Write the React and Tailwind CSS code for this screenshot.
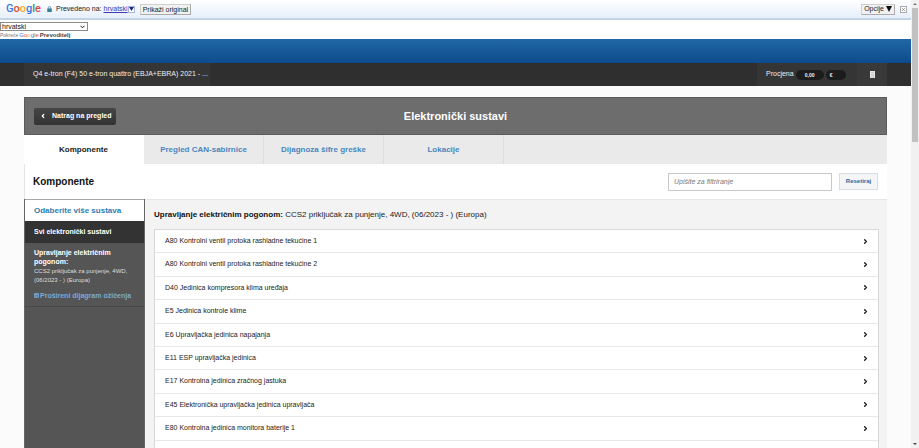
import { ChevronLeft, ChevronRight, X } from "lucide-react";

const tabs = ["Komponente", "Pregled CAN-sabirnice", "Dijagnoza šifre greške", "Lokacije"];

const components = [
  "A80 Kontrolni ventil protoka rashladne tekućine 1",
  "A80 Kontrolni ventil protoka rashladne tekućine 2",
  "D40 Jedinica kompresora klima uređaja",
  "E5 Jedinica kontrole klime",
  "E6 Upravljačka jedinica napajanja",
  "E11 ESP upravljačka jedinica",
  "E17 Kontrolna jedinica zračnog jastuka",
  "E45 Elektronička upravljačka jedinica upravljača",
  "E80 Kontrolna jedinica monitora baterije 1",
];

export default function App() {
  return (
    <div className="flex h-screen overflow-hidden bg-[#fbfbfb] font-['Liberation_Sans',Arial,sans-serif] text-[7px] text-[#222]">
      <div className="flex min-w-0 flex-1 flex-col">
        <TranslateBar />
        <LanguagePicker />

        {/* brand bar */}
        <div className="h-6 shrink-0 bg-linear-to-b from-[#2067a6] to-[#0d4c8c]" />

        <VehicleBar />

        <main className="mx-6 mt-[11px] flex min-h-0 flex-1 flex-col bg-white">
          <PanelHeader />
          <Tabs />
          <FilterRow />
          <div className="flex min-h-0 flex-1">
            <Sidebar />
            <ComponentList />
          </div>
        </main>
      </div>
      <Scrollbar />
    </div>
  );
}

function TranslateBar() {
  return (
    <div className="flex h-5 shrink-0 items-center border-b-2 border-[#c6d3e6] bg-linear-to-b from-white to-[#e6effb] pr-1 pl-[6px]">
      <GoogleWord className="font-[Roboto,sans-serif] text-[11px] font-medium" />
      <svg viewBox="0 0 10 12" className="ml-[6px] h-[6px] w-[5px]">
        <path d="M2.5 6V3.5a2.5 2.5 0 0 1 5 0V6" fill="none" stroke="#4e8a98" strokeWidth="1.6" />
        <rect x="0.5" y="5" width="9" height="7" fill="#3b7f92" />
      </svg>
      <span className="ml-1">Prevedeno na:</span>
      <a href="#jezik" className="ml-[2px] flex items-center text-[#3a3ab5]">
        <span className="underline">hrvatski</span>
        <span className="flex h-[7px] w-[7px] items-center justify-center border border-[#a9b8d8] bg-white">
          <svg viewBox="0 0 10 8" className="h-1 w-[5px] shrink-0">
            <path d="M0 0h10L5 8z" fill="#1d2a8c" />
          </svg>
        </span>
      </a>
      <button className="ml-[5px] h-[11px] border border-[#cfcfcf] border-r-[#aaa] border-b-[#aaa] bg-[#f1f1f1] px-[2px] leading-[9px] text-[#222]">
        Prikaži original
      </button>
      <button className="ml-auto flex h-[11px] items-center gap-[2px] border border-[#cfcfcf] border-r-[#aaa] border-b-[#aaa] bg-[#f1f1f1] px-[2px] text-[#222]">
        Opcije
        <svg viewBox="0 0 10 10" className="h-[6px] w-[6px]">
          <path d="M0 0h10L5 10z" fill="#111" />
        </svg>
      </button>
      <button aria-label="Zatvori" className="ml-[5px] flex h-[7px] w-[7px] items-center justify-center border border-[#aaa] bg-white">
        <X size={5} strokeWidth={3} color="#777" />
      </button>
    </div>
  );
}

function GoogleWord({ className }) {
  return (
    <span className={className}>
      <span className="text-[#3b78e7]">G</span>
      <span className="text-[#dd4b39]">o</span>
      <span className="text-[#f0b41c]">o</span>
      <span className="text-[#3b78e7]">g</span>
      <span className="text-[#2f9e52]">l</span>
      <span className="text-[#dd4b39]">e</span>
    </span>
  );
}

function LanguagePicker() {
  return (
    <div className="h-[19px] shrink-0 bg-white pt-[2px]">
      <div className="relative h-[9px] w-[88px]">
        <select aria-label="Jezik" className="block h-full w-full appearance-none border border-[#8a8a8a] bg-white pl-px text-[7px] leading-[7px] text-[#111]">
          <option>hrvatski</option>
        </select>
        <svg viewBox="0 0 10 7" className="pointer-events-none absolute top-[3px] right-[3px] h-1 w-[5px]">
          <path d="M1 1l4 4 4-4" fill="none" stroke="#111" strokeWidth="2" />
        </svg>
      </div>
      <p className="flex gap-px text-[5px] leading-[8px] text-[#777]">
        <span>Pokreće</span>
        <GoogleWord className="text-[6px]" />
        <span className="text-[6px] font-bold text-[#444]">Prevoditelj</span>
      </p>
    </div>
  );
}

function VehicleBar() {
  return (
    <div className="flex h-[23px] shrink-0 bg-[#2f2f2f] px-6 text-[#eee]">
      <div className="flex w-[186px] items-center bg-[#353535] pl-[9px]">
        Q4 e-tron (F4) 50 e-tron quattro (EBJA+EBRA) 2021 - ...
      </div>
      <div className="ml-auto flex w-[100px] items-center bg-[#353535] pl-[9px]">
        Procjena
        <span className="ml-[2px] w-7 rounded-full bg-[#1c1c1c] text-center text-[5px] leading-[10px] font-bold">0,00</span>
        <span className="ml-[2px] w-5 rounded-full bg-[#1c1c1c] pl-1 text-[5px] leading-[10px] font-bold">€</span>
      </div>
      <div className="flex w-[30px] items-center justify-center bg-[#393939]">
        <svg viewBox="0 0 10 14" className="h-[7px] w-[5px]">
          <rect width="10" height="14" fill="#e8e8e8" />
          <path d="M2 3h6M2 6.500h6M2 9.500h6M2 12h6" stroke="#aaa" strokeWidth="1" />
        </svg>
      </div>
    </div>
  );
}

function PanelHeader() {
  return (
    <div className="grid h-[38px] shrink-0 grid-cols-[1fr_auto_1fr] items-center border border-[#5c5c5c] bg-[#6d6d6d] px-[9px] text-white">
      <button className="flex h-[17px] w-[82px] items-center rounded-[2px] bg-linear-to-b from-[#454545] to-[#333] pl-[6px] font-bold">
        <ChevronLeft size={6} strokeWidth={5} />
        <span className="ml-[6px]">Natrag na pregled</span>
      </button>
      <h1 className="text-[11px] font-bold">Elektronički sustavi</h1>
    </div>
  );
}

function Tabs() {
  return (
    <nav className="flex h-[29px] shrink-0 bg-[#eaeaea] text-[8px] font-bold">
      {tabs.map((tab, i) => (
        <a
          key={tab}
          href="#tab"
          className={`flex w-[120px] items-center justify-center border-r ${
            i === 0 ? "border-white bg-white text-[#222]" : "border-[#dedede] text-[#4a86bd]"
          }`}
        >
          {tab}
        </a>
      ))}
    </nav>
  );
}

function FilterRow() {
  return (
    <div className="flex h-[35px] shrink-0 items-center border-l border-[#e4e4e4] pr-[9px] pl-2">
      <h2 className="text-[10px] font-bold text-[#111]">Komponente</h2>
      <input
        aria-label="Filtriranje"
        placeholder="Upišite za filtriranje"
        className="ml-auto h-[18px] w-[164px] border border-[#c8c8c8] bg-white px-[5px] italic placeholder:text-[#777]"
      />
      <button className="ml-[7px] h-[17px] w-[39px] border border-[#d8dde2] bg-[#f3f5f7] text-[6px] font-bold text-[#2c6a9f]">
        Resetiraj
      </button>
    </div>
  );
}

function Sidebar() {
  return (
    <aside className="w-[121px] shrink-0 border-x border-[#666] bg-[#555] text-white">
      <a href="#odabir" className="flex h-[22px] items-center border-t border-[#aaa] bg-white pl-[9px] text-[8px] font-bold text-[#2f7cb0]">
        Odaberite više sustava
      </a>
      <div className="flex h-[22px] items-center bg-[#333] pl-[9px] font-bold">Svi elektronički sustavi</div>
      <div className="h-[64px] border-b border-[#484848] pt-[5px] pr-2 pl-[9px]">
        <p className="text-[7px] leading-[9px] font-bold">Upravljanje električnim pogonom:</p>
        <p className="mt-px text-[6px] leading-[9px] text-[#ddd]">CCS2 priključak za punjenje, 4WD, (06/2023 - ) (Europa)</p>
        <a href="#dijagram" className="mt-[6px] flex items-center gap-px leading-[9px] font-bold whitespace-nowrap text-[#79abd6]">
          <svg viewBox="0 0 10 10" className="h-[5px] w-[5px]">
            <path d="M1 1h8v8H1zM1 3h8M4 3v6M1 6h8" fill="none" stroke="#79abd6" strokeWidth="1.600" />
          </svg>
          Prošireni dijagram ožičenja
        </a>
      </div>
    </aside>
  );
}

function ComponentList() {
  return (
    <section className="min-w-0 flex-1 border-t border-[#e6e6e6] bg-[#f3f3f3] pr-2 pl-[9px]">
      <h3 className="flex h-[29px] items-center text-[8px] whitespace-pre">
        <b className="text-[#111]">Upravljanje električnim pogonom:</b> CCS2 priključak za punjenje, 4WD, (06/2023 - ) (Europa)
      </h3>
      <ul className="grid min-h-[236px] auto-rows-fr border border-[#d8d8d8] bg-white">
        {components.map((name) => (
          <li key={name} className="border-b border-[#e8e8e8]">
            <a href="#komponenta" className="flex h-full items-center justify-between pr-[9px] pl-[10px]">
              {name}
              <ChevronRight size={7} strokeWidth={5} />
            </a>
          </li>
        ))}
        <li />
      </ul>
    </section>
  );
}

function Scrollbar() {
  return (
    <div className="flex w-2 shrink-0 flex-col items-center bg-[#f1f1f1]">
      <svg viewBox="0 0 8 8" className="h-2 w-2 shrink-0">
        <path d="M2 5l2-2 2 2z" fill="#777" />
      </svg>
      <div className="h-[134px] w-[6px] bg-[#c1c1c1]" />
      <svg viewBox="0 0 8 8" className="mt-auto h-2 w-2 shrink-0">
        <path d="M2 3l2 2 2-2z" fill="#444" />
      </svg>
    </div>
  );
}
